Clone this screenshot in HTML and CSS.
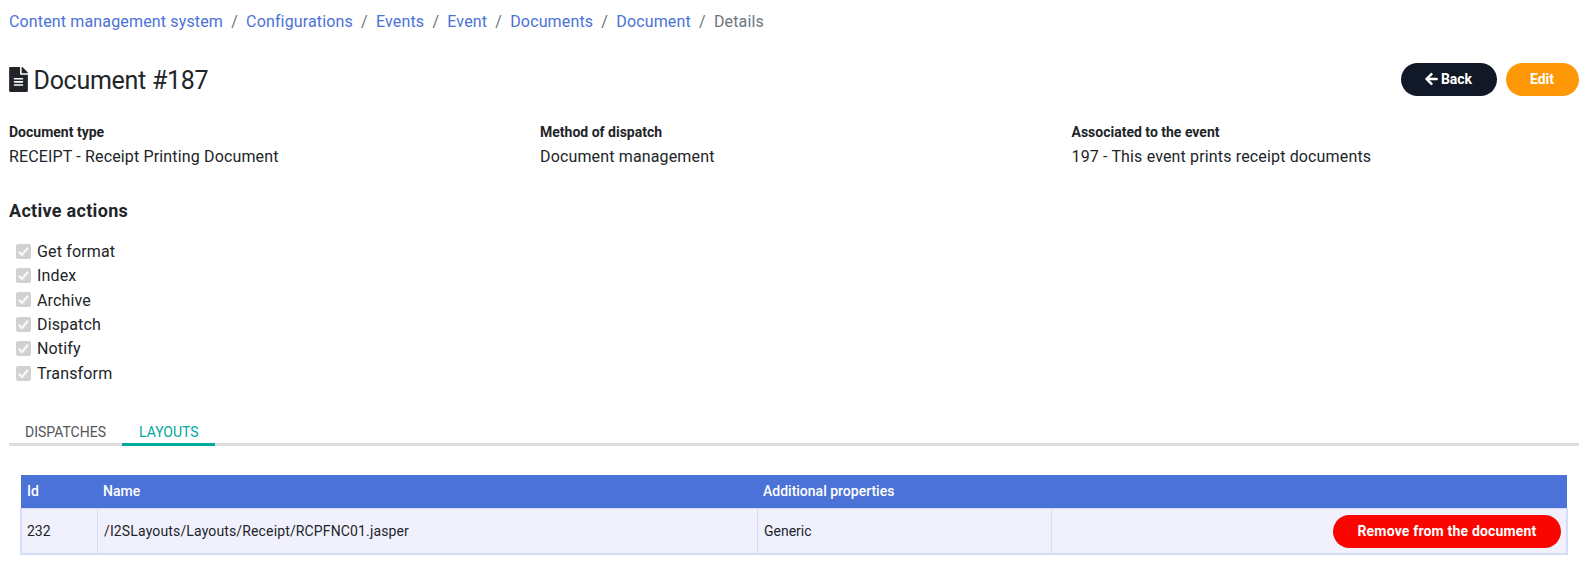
FILE: index.html
```html
<!DOCTYPE html>
<html lang="en">
<head>
<meta charset="utf-8">
<title>Document #187</title>
<link rel="stylesheet" href="styles.css">
</head>
<body>
<nav class="breadcrumb">
  <a class="crumb">Content management system</a><span class="sep">/</span><a class="crumb">Configurations</a><span class="sep">/</span><a class="crumb">Events</a><span class="sep">/</span><a class="crumb">Event</a><span class="sep">/</span><a class="crumb">Documents</a><span class="sep">/</span><a class="crumb">Document</a><span class="sep">/</span><span class="current">Details</span>
</nav>
<header class="header">
  <svg class="doc-icon" viewBox="0 0 384 512"><path fill="currentColor" d="M224 136V0H24C10.700 0 0 10.700 0 24v464c0 13.300 10.700 24 24 24h336c13.300 0 24-10.700 24-24V160H248c-13.200 0-24-10.800-24-24zm64 236c0 6.600-5.400 12-12 12H108c-6.600 0-12-5.400-12-12v-8c0-6.600 5.400-12 12-12h168c6.600 0 12 5.400 12 12v8zm0-64c0 6.600-5.400 12-12 12H108c-6.600 0-12-5.400-12-12v-8c0-6.600 5.400-12 12-12h168c6.600 0 12 5.400 12 12v8zm0-72v8c0 6.600-5.400 12-12 12H108c-6.600 0-12-5.400-12-12v-8c0-6.600 5.400-12 12-12h168c6.600 0 12 5.400 12 12zm96-114.100v6.100H256V0h6.100c6.400 0 12.500 2.500 17 7l97.900 98c4.500 4.500 7 10.600 7 16.900z"/></svg>
  <h1 class="title">Document #187</h1>
  <div class="actions">
    <button class="btn btn-back"><svg class="arrow" viewBox="0 0 448 512"><path fill="currentColor" stroke="currentColor" stroke-width="16" d="M257.500 445.100l-22.200 22.200c-9.400 9.400-24.600 9.400-33.900 0L7 273c-9.400-9.400-9.400-24.600 0-33.900L201.400 44.700c9.400-9.400 24.600-9.400 33.900 0l22.200 22.200c9.500 9.500 9.300 25-.4 34.300L136.600 216H424c13.300 0 24 10.700 24 24v32c0 13.300-10.700 24-24 24H136.600l120.500 114.800c9.800 9.300 10 24.800.4 34.300z"/></svg><span>Back</span></button>
    <button class="btn btn-edit"><span>Edit</span></button>
  </div>
</header>
<section class="fields">
  <div><div class="label">Document type</div><div class="value">RECEIPT - Receipt Printing Document</div></div>
  <div><div class="label">Method of dispatch</div><div class="value">Document management</div></div>
  <div><div class="label">Associated to the event</div><div class="value">197 - This event prints receipt documents</div></div>
</section>
<h2 class="subtitle">Active actions</h2>
<ul class="checks">
  <li><svg class="check" viewBox="0 0 15 15"><rect width="15" height="15" rx="2"/><path d="M2.800 7.800l3.200 3.200 6-7.200"/></svg><span>Get format</span></li>
  <li><svg class="check" viewBox="0 0 15 15"><rect width="15" height="15" rx="2"/><path d="M2.800 7.800l3.200 3.200 6-7.200"/></svg><span>Index</span></li>
  <li><svg class="check" viewBox="0 0 15 15"><rect width="15" height="15" rx="2"/><path d="M2.800 7.800l3.200 3.200 6-7.200"/></svg><span>Archive</span></li>
  <li><svg class="check" viewBox="0 0 15 15"><rect width="15" height="15" rx="2"/><path d="M2.800 7.800l3.200 3.200 6-7.200"/></svg><span>Dispatch</span></li>
  <li><svg class="check" viewBox="0 0 15 15"><rect width="15" height="15" rx="2"/><path d="M2.800 7.800l3.200 3.200 6-7.200"/></svg><span>Notify</span></li>
  <li><svg class="check" viewBox="0 0 15 15"><rect width="15" height="15" rx="2"/><path d="M2.800 7.800l3.200 3.200 6-7.200"/></svg><span>Transform</span></li>
</ul>
<div class="tabs"><div class="tab">DISPATCHES</div><div class="tab active">LAYOUTS</div></div>
<div class="table">
  <div class="row head"><div>Id</div><div>Name</div><div>Additional properties</div><div></div></div>
  <div class="row body"><div>232</div><div>/I2SLayouts/Layouts/Receipt/RCPFNC01.jasper</div><div>Generic</div><div class="last"><button class="btn btn-remove"><span>Remove from the document</span></button></div></div>
</div>
</body>
</html>
```
FILE: styles.css
```css
* { box-sizing: border-box; }
body {
  margin: 0;
  padding: 10px 8px 0 9px;
  background: #fff;
  color: #212529;
  font: 16px/24px Roboto, sans-serif;
  letter-spacing: 0.15px;
}
h1, h2, ul { margin: 0; padding: 0; font-weight: 400; }
.breadcrumb { display: flex; height: 24px; }
.crumb { color: #4b72d6; }
.sep { padding: 0 8.150px; color: #6c757d; }
.current { color: #6c757d; }
.header { display: flex; align-items: center; height: 33px; margin-top: 29px; }
.doc-icon { width: 19px; height: 25px; margin-right: 5.500px; color: #212529; }
.title { padding-top: 2px; font-size: 25px; line-height: 33px; letter-spacing: -0.28px; }
.actions { display: flex; gap: 9px; margin-left: auto; }
.btn {
  display: flex;
  align-items: center;
  justify-content: center;
  height: 33px;
  padding: 0;
  border: 0;
  border-radius: 17px;
  color: #fff;
  font: 700 14px/20px Roboto, sans-serif;
}
.actions .btn { padding: 0 1px 2px 0; }
.btn-back { width: 96px; background: #111827; }
.btn-edit { width: 73px; background: #ff9806; }
.btn-remove { width: 228px; background: #f90600; letter-spacing: 0.18px; }
.arrow { width: 13px; height: 14px; margin-right: 3px; overflow: visible; }
.fields { display: grid; grid-template-columns: 531px 531.5px 1fr; margin-top: 24px; }
.label { font-size: 14px; font-weight: 700; letter-spacing: 0; }
.value { padding-top: 1px; }
.subtitle { margin-top: 30px; font-size: 18px; font-weight: 700; line-height: 24px; letter-spacing: 0.3px; }
.checks { list-style: none; margin-top: 16px; }
.checks li { display: flex; align-items: center; height: 24.4px; padding-left: 7px; }
.checks span { padding-top: 1.400px; }
.check { width: 15px; height: 15px; margin-right: 6px; }
.check rect { fill: #d1d1d1; }
.check path { fill: none; stroke: #f8f8f8; stroke-width: 2.2; }
.tabs { display: flex; height: 28px; margin-top: 32.600px; box-shadow: inset 0 -3px #ddd; }
.tab { height: 28px; padding: 0 16px; color: #555; font-size: 14px; line-height: 28px; letter-spacing: 0; }
.tab.active { width: 93px; padding-left: 17px; color: #00a99d; border-bottom: 3px solid #00a99d; }
.table { margin: 29px 11px 0; font-size: 14px; letter-spacing: 0; }
.row { display: grid; grid-template-columns: 76px 660px 294px 1fr; }
.head { height: 33px; margin: 0 1px; background: #4b72d6; color: #fff; font-weight: 500; line-height: 32px; }
.head div { padding-left: 6px; }
.body { height: 47px; background: #f1f1fe; border: 2px solid #d8dcfb; border-top-width: 1px; grid-template-columns: 75px 660px 294px 1fr; line-height: 45px; }
.body div { height: 44px; padding-left: 5px; }
.body div + div { border-left: 1px solid #d8dcfb; padding-left: 6px; }
.body div:nth-child(2) { letter-spacing: 0.14px; }
.body .last { display: flex; align-items: center; justify-content: flex-end; padding: 1px 5px 0 0; }
```
